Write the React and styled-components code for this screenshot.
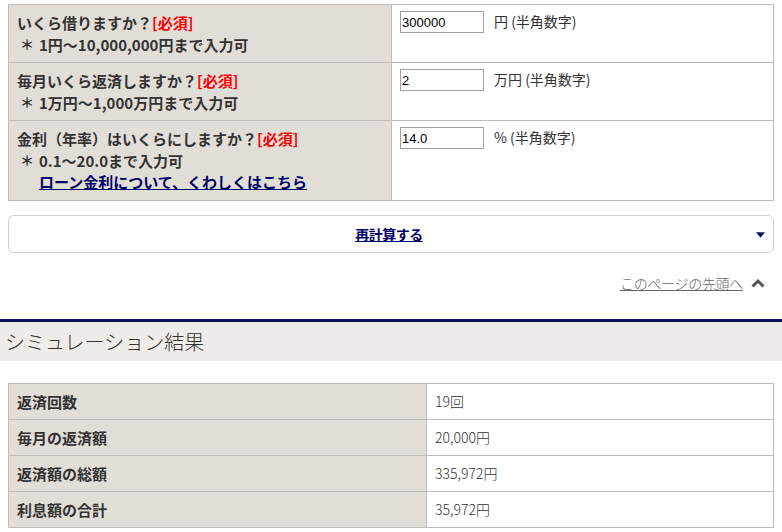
import React from 'react'
import styled, { createGlobalStyle } from 'styled-components'

const GlobalStyle = createGlobalStyle`
body {
  margin: 0;
  background: #fff;
  color: #333;
  font-family: "Noto Sans CJK JP", "Noto Sans", sans-serif;
}
`;

const fields = [
  {
    label: 'いくら借りますか？',
    note: '1円～10,000,000円まで入力可',
    value: '300000',
    unit: '円 (半角数字)',
  },
  {
    label: '毎月いくら返済しますか？',
    note: '1万円～1,000万円まで入力可',
    value: '2',
    unit: '万円 (半角数字)',
  },
  {
    label: '金利（年率）はいくらにしますか？',
    note: '0.1～20.0まで入力可',
    value: '14.0',
    unit: '% (半角数字)',
    link: 'ローン金利について、くわしくはこちら',
  },
];

const results = [
  ['返済回数', '19回'],
  ['毎月の返済額', '20,000円'],
  ['返済額の総額', '335,972円'],
  ['利息額の合計', '35,972円'],
];

const App = () => {
  return (
    <Page>
      <GlobalStyle />
      <Inner>
        <FormTable>
          <tbody>
            {fields.map((f) => (
              <tr key={f.label}>
                <LabelCell>
                  <LabelLine>
                    {f.label}
                    <Required>[必須]</Required>
                  </LabelLine>
                  <Note>
                    <Mark>＊</Mark>
                    <NoteBody>
                      <div>{f.note}</div>
                      {f.link && <HelpLink href="#">{f.link}</HelpLink>}
                    </NoteBody>
                  </Note>
                </LabelCell>
                <ValueCell>
                  <InputRow>
                    <NumberInput defaultValue={f.value} />
                    <Unit>{f.unit}</Unit>
                  </InputRow>
                </ValueCell>
              </tr>
            ))}
          </tbody>
        </FormTable>

        <RecalcButton>
          <RecalcText>再計算する</RecalcText>
          <Caret viewBox="0 0 10 6">
            <path d="M0 0 H10 L5 6 Z" fill="#14145a" />
          </Caret>
        </RecalcButton>

        <PageTopRow>
          <PageTopLink href="#">このページの先頭へ</PageTopLink>
          <Chevron viewBox="0 0 14 10">
            <path d="M1.5 8.5 L7 3 L12.5 8.5" fill="none" stroke="#555" strokeWidth="3" />
          </Chevron>
        </PageTopRow>
      </Inner>

      <SectionHeading>シミュレーション結果</SectionHeading>

      <Inner>
        <ResultTable>
          <tbody>
            {results.map(([k, v]) => (
              <tr key={k}>
                <ResultLabel>{k}</ResultLabel>
                <ResultValue>{v}</ResultValue>
              </tr>
            ))}
          </tbody>
        </ResultTable>
      </Inner>
    </Page>
  )
}

export default App

const Page = styled.div`
padding-top: 4px;
`;

const Inner = styled.div`
padding: 0 8px;
`;

const FormTable = styled.table`
width: 766px;
border-collapse: collapse;
border: 1px solid #bcbcbc;
`;

const LabelCell = styled.th`
width: 366px;
background: #e1ded8;
border: 1px solid #bcbcbc;
text-align: left;
vertical-align: top;
padding: 7px 8px 7px 8px;
font-size: 15px;
font-weight: 700;
line-height: 21.5px;
color: #333;
`;

const LabelLine = styled.div`
white-space: nowrap;
`;

const Required = styled.span`
color: #f00;
`;

const Note = styled.div`
display: flex;
padding-left: 3px;
`;

const Mark = styled.span`
width: 19px;
flex-shrink: 0;
font-size: 14px;
`;

const NoteBody = styled.div`
display: flex;
flex-direction: column;
`;

const HelpLink = styled.a`
color: #000066;
text-decoration: underline;
`;

const ValueCell = styled.td`
border: 1px solid #bcbcbc;
vertical-align: top;
padding: 6px 8px;
`;

const InputRow = styled.div`
display: flex;
align-items: flex-start;
gap: 10px;
`;

const NumberInput = styled.input`
box-sizing: border-box;
width: 84px;
height: 22px;
margin: 0;
padding: 1px 1px;
border: 1px solid #a0a0a0;
font-family: "Liberation Sans", Arial, sans-serif;
font-size: 13px;
color: #000;
`;

const Unit = styled.span`
font-size: 14px;
line-height: 20px;
color: #333;
`;

const RecalcButton = styled.div`
position: relative;
box-sizing: border-box;
width: 766px;
height: 38px;
margin-top: 14px;
border: 1px solid #cfcfcf;
border-radius: 6px;
display: flex;
align-items: center;
justify-content: center;
background: #fff;
`;

const RecalcText = styled.a`
font-size: 14px;
font-weight: 700;
color: #000066;
text-decoration: underline;
letter-spacing: -0.5px;
margin-left: -4px;
`;

const Caret = styled.svg`
position: absolute;
right: 8px;
top: 16px;
width: 9px;
height: 6px;
`;

const PageTopRow = styled.div`
display: flex;
justify-content: flex-end;
align-items: center;
gap: 8px;
margin-top: 20px;
padding-right: 9px;
height: 20px;
`;

const PageTopLink = styled.a`
font-size: 14px;
font-weight: 300;
color: #666;
text-decoration: underline;
letter-spacing: -0.3px;
`;

const Chevron = styled.svg`
width: 14px;
height: 10px;
`;

const SectionHeading = styled.h2`
margin: 26px 0 0 0;
border-top: 3px solid #10105c;
background: #eeece8;
height: 39px;
line-height: 39px;
padding: 0 5px;
font-size: 20px;
font-weight: 300;
color: #333;
`;

const ResultTable = styled.table`
width: 766px;
margin-top: 22px;
border-collapse: collapse;
border: 1px solid #bcbcbc;
`;

const ResultLabel = styled.th`
width: 401px;
height: 35px;
padding: 0 8px;
background: #e1ded8;
border: 1px solid #bcbcbc;
text-align: left;
font-size: 15px;
font-weight: 700;
color: #333;
`;

const ResultValue = styled.td`
height: 35px;
padding: 0 8px;
border: 1px solid #bcbcbc;
font-size: 14px;
font-weight: 300;
color: #333;
`;
